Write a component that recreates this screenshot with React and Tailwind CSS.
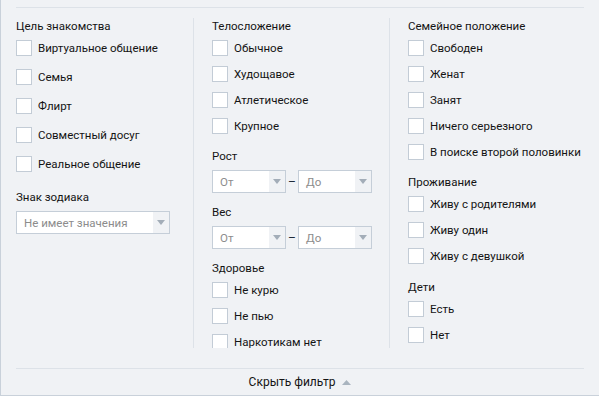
import React from "react";

function Box() {
  return <span className="block w-4 h-4 shrink-0 bg-white border border-[#c3ccd6]" />;
}

function Check({ label }) {
  return (
    <div className="flex items-center h-4 gap-[6px]">
      <Box />
      <span className="leading-4 whitespace-nowrap">{label}</span>
    </div>
  );
}

function Heading({ children, className = "" }) {
  return <div className={"h-4 leading-4 whitespace-nowrap " + className}>{children}</div>;
}

function Arrow() {
  return (
    <svg width="8" height="5" viewBox="0 0 8 5" className="block">
      <path d="M0 0H8L4 5Z" fill="#a3adb8" />
    </svg>
  );
}

function Select({ text, className = "" }) {
  return (
    <div className={"flex h-[23px] bg-white border border-[#c5ced8] " + className}>
      <div className="flex-1 pl-[7px] flex items-center text-[#8c8c8c] leading-4 whitespace-nowrap overflow-hidden">
        {text}
      </div>
      <div className="w-4 bg-[#f0f2f5] flex items-center justify-center">
        <Arrow />
      </div>
    </div>
  );
}

function Range() {
  return (
    <div className="mt-[6px] flex items-center">
      <Select text="От" className="w-[74px]" />
      <span className="w-3 text-center text-[12px] text-[#1e2a3a]">–</span>
      <Select text="До" className="w-[74px]" />
    </div>
  );
}

export default function App() {
  return (
    <div
      className="w-[599px] h-[396px] bg-[#f0f2f5] border-l border-b border-[#c9d1da] overflow-hidden text-[11.5px] text-[#141414]"
      style={{ fontFamily: "Roboto, 'Liberation Sans', sans-serif" }}
    >
      <div className="pt-[7px] pl-[15px] pr-[15px]">
        <div className="border-t border-[#dde2e8]" />
        <div className="mt-[10px] h-[330px] flex overflow-hidden">
          <div className="w-[177px] shrink-0">
            <Heading>Цель знакомства</Heading>
            <div className="mt-[6px] flex flex-col gap-[13px]">
              <Check label="Виртуальное общение" />
              <Check label="Семья" />
              <Check label="Флирт" />
              <Check label="Совместный досуг" />
              <Check label="Реальное общение" />
            </div>
            <Heading className="mt-[17px]">Знак зодиака</Heading>
            <Select text="Не имеет значения" className="mt-[6px] w-[154px]" />
          </div>
          <div className="w-[196px] shrink-0 border-l border-[#dde2e8] pl-[18px]">
            <Heading>Телосложение</Heading>
            <div className="mt-[6px] flex flex-col gap-[10px]">
              <Check label="Обычное" />
              <Check label="Худощавое" />
              <Check label="Атлетическое" />
              <Check label="Крупное" />
            </div>
            <Heading className="mt-[14px]">Рост</Heading>
            <Range />
            <Heading className="mt-[11px]">Вес</Heading>
            <Range />
            <Heading className="mt-[11px]">Здоровье</Heading>
            <div className="mt-[6px] flex flex-col gap-[10px]">
              <Check label="Не курю" />
              <Check label="Не пью" />
              <Check label="Наркотикам нет" />
            </div>
          </div>
          <div className="flex-1 border-l border-[#dde2e8] pl-[18px]">
            <Heading>Семейное положение</Heading>
            <div className="mt-[6px] flex flex-col gap-[10px]">
              <Check label="Свободен" />
              <Check label="Женат" />
              <Check label="Занят" />
              <Check label="Ничего серьезного" />
              <Check label="В поиске второй половинки" />
            </div>
            <Heading className="mt-[14px]">Проживание</Heading>
            <div className="mt-[6px] flex flex-col gap-[10px]">
              <Check label="Живу с родителями" />
              <Check label="Живу один" />
              <Check label="Живу с девушкой" />
            </div>
            <Heading className="mt-[15px]">Дети</Heading>
            <div className="mt-[6px] flex flex-col gap-[10px]">
              <Check label="Есть" />
              <Check label="Нет" />
            </div>
          </div>
        </div>
        <div className="mt-5 border-t border-[#dde2e8]" />
        <div className="h-[26px] flex items-center justify-center gap-[7px] text-[12px]">
          <span className="leading-4">Скрыть фильтр</span>
          <svg width="9" height="5" viewBox="0 0 9 5" className="block">
            <path d="M0 5H9L4.5 0Z" fill="#a9b4bf" />
          </svg>
        </div>
      </div>
    </div>
  );
}
